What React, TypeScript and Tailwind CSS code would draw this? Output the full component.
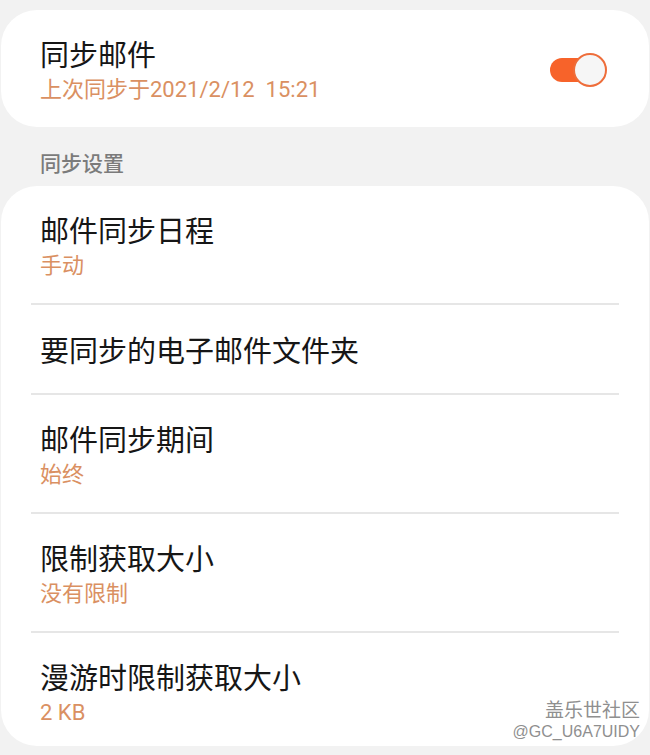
const font = { fontFamily: '"Noto Sans CJK SC", sans-serif' };

type Row = { title: string; sub?: string };

const rows: Row[] = [
  { title: "邮件同步日程", sub: "手动" },
  { title: "要同步的电子邮件文件夹" },
  { title: "邮件同步期间", sub: "始终" },
  { title: "限制获取大小", sub: "没有限制" },
  { title: "漫游时限制获取大小", sub: "2 KB" },
];

function Toggle() {
  return (
    <div className="relative h-[34px] w-[57px]">
      <div className="absolute left-0 top-[5px] h-[24px] w-[46px] rounded-full bg-[#f7632a]" />
      <div className="absolute right-0 top-0 h-[34px] w-[34px] rounded-full border-2 border-[#ee6d3a] bg-[#f6f6f6]" />
    </div>
  );
}

function SettingRow({ row, last }: { row: Row; last: boolean }) {
  const pad = row.sub ? (last ? "pt-[25px] pb-[19px]" : "pt-[25px] pb-[23px]") : "py-[26px]";
  return (
    <div className={"px-[39px] " + pad}>
      <div className="text-[29px] leading-[36px] text-[#161616]">{row.title}</div>
      {row.sub && (
        <div
          className="mt-[5px] text-[22px] leading-[28px] text-[#da9062]"
          style={{ fontFamily: 'Roboto, "Noto Sans CJK SC", sans-serif' }}
        >
          {row.sub}
        </div>
      )}
    </div>
  );
}

export default function App() {
  return (
    <div className="relative h-[755px] w-[650px] overflow-hidden bg-[#f2f2f2] px-[1px] pt-[10px]" style={font}>
      <div className="flex items-center justify-between rounded-[36px] bg-white pl-[39px] pr-[42px] pt-[25px] pb-[23px]">
        <div>
          <div className="text-[29px] leading-[36px] text-[#161616]">同步邮件</div>
          <div
            className="mt-[5px] whitespace-pre text-[22px] leading-[28px] text-[#da9062]"
            style={{ fontFamily: 'Roboto, "Noto Sans CJK SC", sans-serif' }}
          >
            {"上次同步于2021/2/12  15:21"}
          </div>
        </div>
        <Toggle />
      </div>

      <div className="mt-[21px] mb-[10px] pl-[39px] text-[21px] leading-[28px] font-medium text-[#7b7b7b]">同步设置</div>

      <div className="rounded-[36px] bg-white">
        {rows.map((row, i) => (
          <div key={row.title}>
            {i > 0 && <div className="mx-[30px] h-[2px] bg-[#e6e6e6]" />}
            <SettingRow row={row} last={i === rows.length - 1} />
          </div>
        ))}
      </div>

      <div className="absolute bottom-[12px] right-[10px] text-right text-[#8f8f8f]">
        <div className="text-[19px] leading-[24px]">盖乐世社区</div>
        <div className="text-[16px] leading-[22px]" style={{ fontFamily: '"Liberation Sans", sans-serif' }}>
          @GC_U6A7UIDY
        </div>
      </div>
    </div>
  );
}
